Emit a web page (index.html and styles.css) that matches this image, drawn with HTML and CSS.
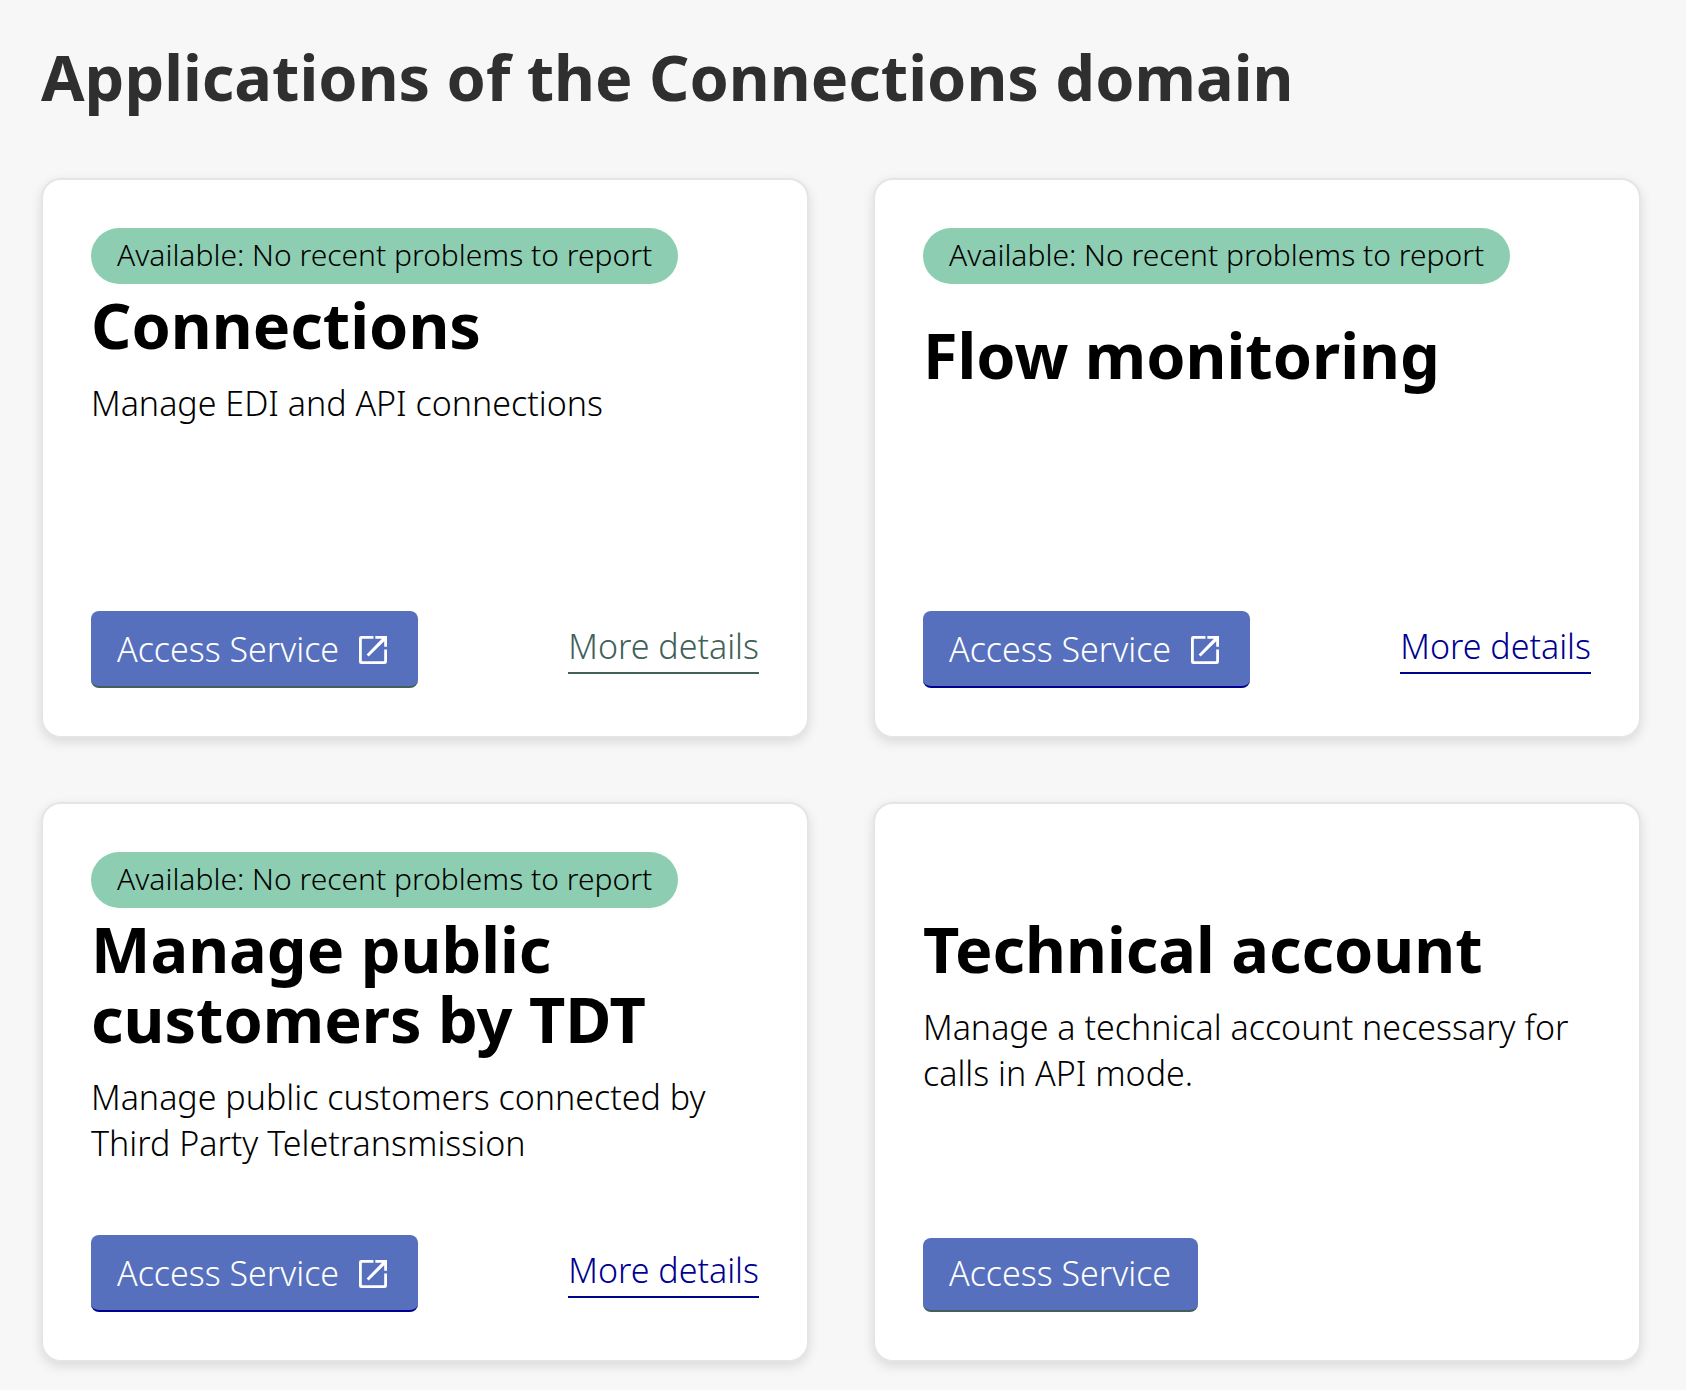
FILE: index.html
```html
<!DOCTYPE html>
<html lang="en">
<head>
  <meta charset="utf-8">
  <meta name="viewport" content="width=device-width, initial-scale=1">
  <title>Applications of the Connections domain</title>
  <link rel="stylesheet" href="styles.css">
</head>
<body>
  <main class="page">
    <h1 class="page-title">Applications of the Connections domain</h1>
    <div class="cards">
      <article class="card">
        <div class="card-status"><span class="badge">Available: No recent problems to report</span></div>
        <div class="card-body">
          <h2 class="card-title">Connections</h2>
          <p class="card-text">Manage EDI and API connections</p>
        </div>
        <div class="card-actions">
          <button type="button" class="button button-external button-visited">Access Service
            <svg class="icon" viewBox="0 0 18 18" aria-hidden="true"><path d="M9.300 0v1.800H2.300a.5.500 0 0 0-.5.500v13.400a.5.500 0 0 0 .5.500h13.400a.5.500 0 0 0 .5-.5V8.700H18V16.500a1.500 1.500 0 0 1-1.500 1.500h-15A1.500 1.500 0 0 1 0 16.500v-15A1.500 1.500 0 0 1 1.500 0zM18 0v6.900h-1.800V3.400L6.200 13.200 4.900 11.900 14.700 1.800H10.500V0z"/></svg>
          </button>
          <a class="link link-visited" href="#connections">More details</a>
        </div>
      </article>

      <article class="card">
        <div class="card-status"><span class="badge">Available: No recent problems to report</span></div>
        <div class="card-body card-body-centered">
          <h2 class="card-title">Flow monitoring</h2>
        </div>
        <div class="card-actions">
          <button type="button" class="button button-external">Access Service
            <svg class="icon" viewBox="0 0 18 18" aria-hidden="true"><path d="M9.300 0v1.800H2.300a.5.500 0 0 0-.5.500v13.400a.5.500 0 0 0 .5.500h13.400a.5.500 0 0 0 .5-.5V8.700H18V16.500a1.500 1.500 0 0 1-1.500 1.500h-15A1.500 1.500 0 0 1 0 16.500v-15A1.500 1.500 0 0 1 1.500 0zM18 0v6.900h-1.800V3.400L6.200 13.200 4.900 11.900 14.700 1.800H10.500V0z"/></svg>
          </button>
          <a class="link" href="#flow-monitoring">More details</a>
        </div>
      </article>

      <article class="card">
        <div class="card-status"><span class="badge">Available: No recent problems to report</span></div>
        <div class="card-body">
          <h2 class="card-title">Manage public customers by TDT</h2>
          <p class="card-text">Manage public customers connected by Third Party Teletransmission</p>
        </div>
        <div class="card-actions">
          <button type="button" class="button button-external">Access Service
            <svg class="icon" viewBox="0 0 18 18" aria-hidden="true"><path d="M9.300 0v1.800H2.300a.5.500 0 0 0-.5.500v13.400a.5.500 0 0 0 .5.500h13.400a.5.500 0 0 0 .5-.5V8.700H18V16.500a1.500 1.500 0 0 1-1.500 1.500h-15A1.500 1.500 0 0 1 0 16.500v-15A1.500 1.500 0 0 1 1.500 0zM18 0v6.900h-1.800V3.400L6.200 13.200 4.900 11.900 14.700 1.800H10.500V0z"/></svg>
          </button>
          <a class="link" href="#public-customers">More details</a>
        </div>
      </article>

      <article class="card">
        <div class="card-status"></div>
        <div class="card-body">
          <h2 class="card-title">Technical account</h2>
          <p class="card-text">Manage a technical account necessary for calls in API mode.</p>
        </div>
        <div class="card-actions">
          <button type="button" class="button button-visited">Access Service</button>
        </div>
      </article>
    </div>
  </main>
</body>
</html>
```
FILE: styles.css
```css
:root {
  --accent: #5770be;
  --link: #000091;
  --visited: #416159;
  --success: #8dcdb2;
}

* {
  box-sizing: border-box;
}

body {
  margin: 0;
  background: #f7f7f7;
  color: #000;
  font-family: "Noto Sans", "Open Sans", sans-serif;
  font-size: 34px;
  font-weight: 300;
  line-height: 46px;
}

.page {
  padding: 42px 45px 28px 41px;
}

.page-title {
  margin: 0 0 66px;
  color: #2f2f2f;
  font-size: 63px;
  font-weight: 700;
  line-height: 70px;
}

.cards {
  display: grid;
  grid-template-columns: repeat(2, minmax(0, 1fr));
  gap: 64px;
}

.card {
  display: flex;
  flex-direction: column;
  min-height: 560px;
  padding: 48px;
  border: 2px solid #e5e5e5;
  border-radius: 20px;
  background: #fff;
  box-shadow: 0 4px 12px rgba(0, 0, 0, 0.12);
}

.card-status {
  display: flex;
  min-height: 56px;
  margin-bottom: 6px;
}

.badge {
  padding: 6px 26px 8px;
  border-radius: 28px;
  background: var(--success);
  font-size: 30px;
  line-height: 42px;
}

.card-body {
  flex: 1;
}

.card-body-centered {
  padding-top: 30px;
}

.card-title {
  margin: 0;
  font-size: 63px;
  font-weight: 700;
  line-height: 70px;
}

.card-text {
  margin: 20px 0 0;
}

.card-actions {
  display: flex;
  align-items: center;
  justify-content: space-between;
}

.button {
  display: inline-flex;
  align-items: center;
  gap: 20px;
  padding: 12px 27px 14px 26px;
  border: 0;
  border-bottom: 2px solid var(--link);
  border-radius: 8px;
  background: var(--accent);
  color: #fff;
  font: inherit;
  cursor: pointer;
}

.button-external {
  padding: 15px 31px 14px 26px;
}

.button-visited {
  border-bottom-color: var(--visited);
}

.icon {
  width: 28px;
  height: 28px;
  margin-top: 2px;
  fill: currentColor;
}

.link {
  padding-bottom: 6px;
  border-bottom: 2px solid currentColor;
  color: var(--link);
  line-height: 40px;
  text-decoration: none;
}

.link-visited {
  color: var(--visited);
}
```
